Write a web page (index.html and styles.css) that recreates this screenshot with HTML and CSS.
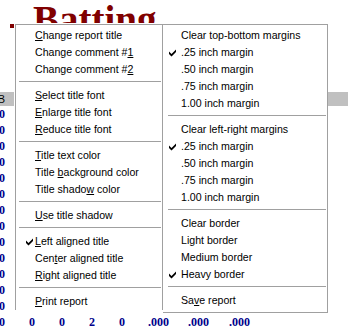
FILE: index.html
```html
<!DOCTYPE html>
<html lang="en">
<head>
  <meta charset="UTF-8" />
  <title>Batting</title>
  <link rel="stylesheet" href="styles.css">
</head>
<body>
  <h1 class="title"><span class="title-mark"></span>Batting</h1>

  <table class="stats">
    <colgroup>
      <col class="c-num"><col class="c-num"><col class="c-num"><col class="c-num"><col class="c-num">
      <col class="c-avg"><col class="c-obp"><col class="c-slg"><col>
    </colgroup>
    <tr class="head"><th>AB</th><th></th><th></th><th></th><th></th><th></th><th></th><th></th><th></th></tr>
    <tr><td>0</td><td></td><td></td><td></td><td></td><td></td><td></td><td></td><td></td></tr>
    <tr><td>0</td><td></td><td></td><td></td><td></td><td></td><td></td><td></td><td></td></tr>
    <tr><td>0</td><td></td><td></td><td></td><td></td><td></td><td></td><td></td><td></td></tr>
    <tr><td>0</td><td></td><td></td><td></td><td></td><td></td><td></td><td></td><td></td></tr>
    <tr><td>0</td><td></td><td></td><td></td><td></td><td></td><td></td><td></td><td></td></tr>
    <tr><td>0</td><td></td><td></td><td></td><td></td><td></td><td></td><td></td><td></td></tr>
    <tr><td>0</td><td></td><td></td><td></td><td></td><td></td><td></td><td></td><td></td></tr>
    <tr><td>0</td><td></td><td></td><td></td><td></td><td></td><td></td><td></td><td></td></tr>
    <tr><td>0</td><td></td><td></td><td></td><td></td><td></td><td></td><td></td><td></td></tr>
    <tr><td>0</td><td></td><td></td><td></td><td></td><td></td><td></td><td></td><td></td></tr>
    <tr><td>0</td><td></td><td></td><td></td><td></td><td></td><td></td><td></td><td></td></tr>
    <tr><td>0</td><td></td><td></td><td></td><td></td><td></td><td></td><td></td><td></td></tr>
    <tr><td>0</td><td></td><td></td><td></td><td></td><td></td><td></td><td></td><td></td></tr>
    <tr><td>0</td><td>0</td><td>0</td><td>2</td><td>0</td><td>.000</td><td>.000</td><td>.000</td><td></td></tr>
  </table>

  <div class="popup">
    <ul class="col col-left">
      <li class="item"><span class="check"></span><span><u>C</u>hange report title</span></li>
      <li class="item"><span class="check"></span><span>Change comment #<u>1</u></span></li>
      <li class="item"><span class="check"></span><span>Change comment #<u>2</u></span></li>
      <li class="sep"></li>
      <li class="item"><span class="check"></span><span><u>S</u>elect title font</span></li>
      <li class="item"><span class="check"></span><span><u>E</u>nlarge title font</span></li>
      <li class="item"><span class="check"></span><span><u>R</u>educe title font</span></li>
      <li class="sep"></li>
      <li class="item"><span class="check"></span><span><u>T</u>itle text color</span></li>
      <li class="item"><span class="check"></span><span>Title <u>b</u>ackground color</span></li>
      <li class="item"><span class="check"></span><span>Title shado<u>w</u> color</span></li>
      <li class="sep"></li>
      <li class="item"><span class="check"></span><span><u>U</u>se title shadow</span></li>
      <li class="sep"></li>
      <li class="item"><span class="check"><svg class="tick" viewBox="0 0 7 8" width="7" height="8"><polygon points="0,2.5 2.5,5 7,0.5 7,3 2.5,7.5 0,5"/></svg></span><span><u>L</u>eft aligned title</span></li>
      <li class="item"><span class="check"></span><span>Cen<u>t</u>er aligned title</span></li>
      <li class="item"><span class="check"></span><span><u>R</u>ight aligned title</span></li>
      <li class="sep"></li>
      <li class="item"><span class="check"></span><span><u>P</u>rint report</span></li>
    </ul>
    <ul class="col col-right">
      <li class="item"><span class="check"></span><span>Clear top-bottom margins</span></li>
      <li class="item"><span class="check"><svg class="tick" viewBox="0 0 7 8" width="7" height="8"><polygon points="0,2.5 2.5,5 7,0.5 7,3 2.5,7.5 0,5"/></svg></span><span>.25 inch margin</span></li>
      <li class="item"><span class="check"></span><span>.50 inch margin</span></li>
      <li class="item"><span class="check"></span><span>.75 inch margin</span></li>
      <li class="item"><span class="check"></span><span>1.00 inch margin</span></li>
      <li class="sep"></li>
      <li class="item"><span class="check"></span><span>Clear left-right margins</span></li>
      <li class="item"><span class="check"><svg class="tick" viewBox="0 0 7 8" width="7" height="8"><polygon points="0,2.5 2.5,5 7,0.5 7,3 2.5,7.5 0,5"/></svg></span><span>.25 inch margin</span></li>
      <li class="item"><span class="check"></span><span>.50 inch margin</span></li>
      <li class="item"><span class="check"></span><span>.75 inch margin</span></li>
      <li class="item"><span class="check"></span><span>1.00 inch margin</span></li>
      <li class="sep"></li>
      <li class="item"><span class="check"></span><span>Clear border</span></li>
      <li class="item"><span class="check"></span><span>Light border</span></li>
      <li class="item"><span class="check"></span><span>Medium border</span></li>
      <li class="item"><span class="check"><svg class="tick" viewBox="0 0 7 8" width="7" height="8"><polygon points="0,2.5 2.5,5 7,0.5 7,3 2.5,7.5 0,5"/></svg></span><span>Heavy border</span></li>
      <li class="sep"></li>
      <li class="item"><span class="check"></span><span>Sa<u>v</u>e report</span></li>
    </ul>
  </div>
</body>
</html>
```

FILE: styles.css
```css
body {
  margin: 0;
  height: 334px;
  overflow: hidden;
  background: #fff;
  font-family: "Liberation Serif", serif;
}
.title {
  margin: 0;
  padding-left: 10px;
  font-size: 39px;
  line-height: 39px;
  font-weight: bold;
  color: #800000;
  white-space: nowrap;
}
.title-mark {
  display: inline-block;
  width: 5px;
  height: 4px;
  margin-right: 18px;
  background: #800000;
  vertical-align: 5px;
}
.stats {
  margin: 53px 0 0 -25px;
  width: calc(100% + 25px);
  border-collapse: collapse;
  table-layout: fixed;
  font-size: 12px;
  font-weight: bold;
  color: #00008b;
}
.stats .c-num { width: 30px; }
.stats .c-avg { width: 44px; }
.stats .c-obp { width: 40px; }
.stats .c-slg { width: 41px; }
.stats th, .stats td {
  padding: 0;
  text-align: right;
  white-space: nowrap;
}
.stats .head {
  height: 14px;
  background: #c0c0c0;
}
.stats th {
  font: 11px "Liberation Sans", sans-serif;
  line-height: 14px;
  color: #000;
}
.stats td {
  height: 16px;
  line-height: 16px;
}
/* popup menu over the report */
.popup {
  position: absolute;
  left: 15px;
  top: 24px;
  display: flex;
  align-items: flex-start;
  border-top: 1px solid #a0a0a0;
  border-right: 1px solid #a0a0a0;
  box-shadow: -1px -1px 0 #fff;
  background: #fff;
  font: 10.6px "Liberation Sans", sans-serif;
  color: #000;
}
.col {
  list-style: none;
  margin: 0;
  padding: 2px 0 0;
}
.col-left {
  width: 146px;
  border-left: 1px solid #a0a0a0;
  border-right: 1px solid #a0a0a0;
}
.col-right {
  width: 164px;
  padding-bottom: 3px;
  border-bottom: 1px solid #a0a0a0;
}
.item {
  display: flex;
  align-items: center;
  height: 17px;
  line-height: 17px;
  white-space: nowrap;
}
.col-left .item { padding-left: 10px; }
.col-right .item { padding-left: 6px; }
.check {
  display: flex;
  align-items: center;
  flex: none;
  height: 17px;
}
.col-left .check { width: 9px; }
.col-right .check { width: 12px; }
.tick { fill: #000; }
.sep {
  height: 1px;
  background: #a0a0a0;
}
.col-left .sep { margin: 3px 1px 5px 3px; }
.col-right .sep { margin: 3px 1px 5px 5px; }
```
